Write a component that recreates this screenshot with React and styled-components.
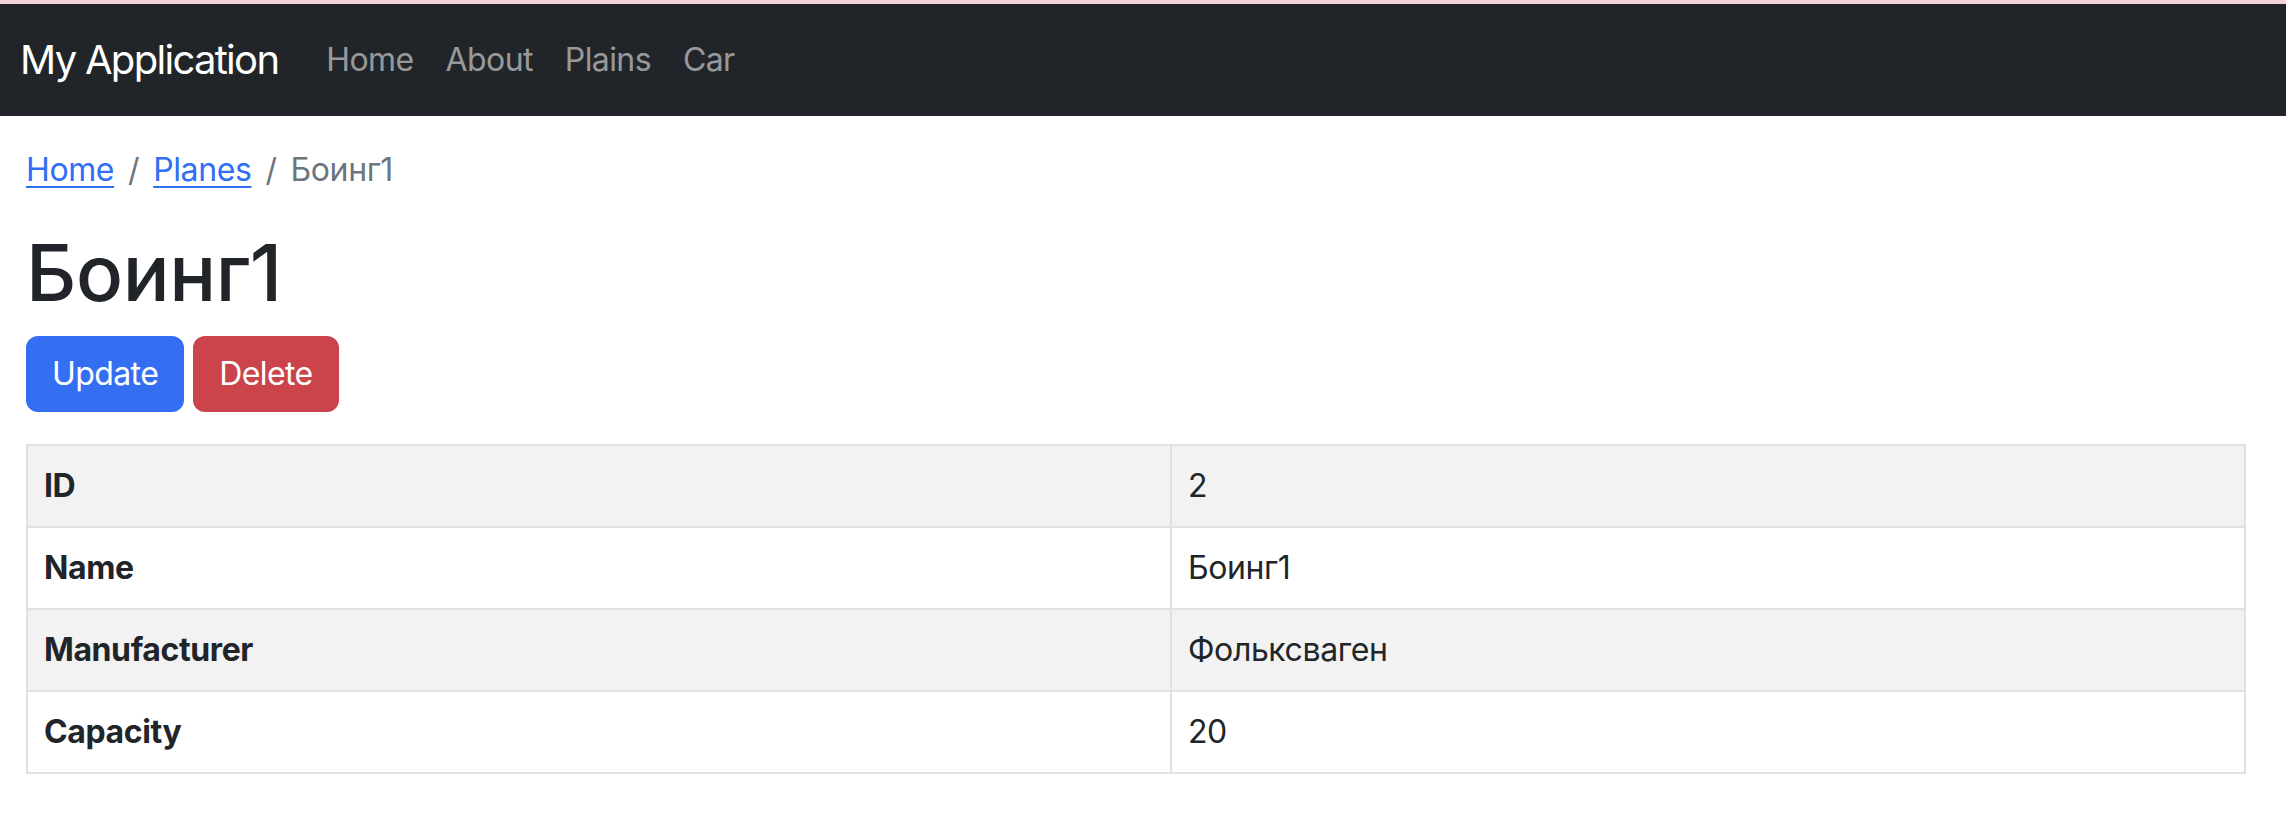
import React from "react";
import styled, { createGlobalStyle } from "styled-components";

const Global = createGlobalStyle`
  html, body { margin: 0; padding: 0; background: #fff; }
  body {
    font-family: Inter, "Noto Sans", "Liberation Sans", sans-serif;
    font-size: 32px;
    line-height: 1.5;
    color: #212529;
  }
  * { box-sizing: border-box; }
`;

const TopStrip = styled.div`
  height: 4px;
  background: #f2d2d6;
`;

const Navbar = styled.nav`
  background: #212529;
  height: 112px;
  display: flex;
  align-items: center;
  padding: 0 20px;
`;

const Brand = styled.a`
  color: #fff;
  font-size: 40px;
  line-height: 60px;
  text-decoration: none;
  margin-right: 32px;
  letter-spacing: -1.7px;
`;

const NavList = styled.ul`
  list-style: none;
  margin: 0;
  padding: 0;
  display: flex;
`;

const NavLink = styled.a`
  display: block;
  padding: 10px 16px;
  font-size: 32px;
  line-height: 48px;
  color: rgba(255, 255, 255, 0.55);
  text-decoration: none;
  letter-spacing: -0.6px;
`;

const Main = styled.main`
  padding: 30px 40px 40px 26px;
`;

const Crumbs = styled.ol`
  list-style: none;
  margin: 0 0 32px;
  padding: 0;
  display: flex;
  line-height: 48px;
  letter-spacing: -0.4px;
`;

const Crumb = styled.li`
  color: #6c757d;
  & + &::before {
    content: "/";
    color: #6c757d;
    padding: 0 14px;
  }
`;

const CrumbLink = styled.a`
  color: #2f6ef5;
  text-decoration: underline;
  text-underline-offset: 5px;
  text-decoration-thickness: 2px;
`;

const Title = styled.h1`
  margin: 0 0 16px;
  font-size: 78px;
  font-weight: 500;
  line-height: 1.2;
  letter-spacing: -0.4px;
`;

const Actions = styled.div`
  display: flex;
  gap: 9px;
`;

const Button = styled.button`
  font-family: inherit;
  font-size: 32px;
  line-height: 48px;
  padding: 12px 24px;
  border: 2px solid ${(p) => (p.$variant === "danger" ? "#cb444b" : "#346ff3")};
  background: ${(p) => (p.$variant === "danger" ? "#cb444b" : "#346ff3")};
  color: #fff;
  border-radius: 12px;
  letter-spacing: -0.6px;
  cursor: pointer;
`;

const Table = styled.table`
  margin-top: 32px;
  width: 2220px;
  border-collapse: collapse;
  border: 2px solid #dee2e6;
`;

const Row = styled.tr`
  background: ${(p) => (p.$striped ? "#f2f2f2" : "#fff")};
  border-bottom: 2px solid #dee2e6;
`;

const HeadCell = styled.th`
  width: 1144px;
  text-align: left;
  font-weight: 700;
  padding: 16px;
  line-height: 48px;
  border-right: 2px solid #dee2e6;
  letter-spacing: -0.4px;
`;

const Cell = styled.td`
  padding: 16px;
  line-height: 48px;
  letter-spacing: -0.4px;
`;

const rows = [
  ["ID", "2"],
  ["Name", "Боинг1"],
  ["Manufacturer", "Фольксваген"],
  ["Capacity", "20"],
];

export default function App() {
  return (
    <>
      <Global />
      <TopStrip />
      <Navbar>
        <Brand href="#">My Application</Brand>
        <NavList>
          {["Home", "About", "Plains", "Car"].map((l) => (
            <li key={l}>
              <NavLink href="#">{l}</NavLink>
            </li>
          ))}
        </NavList>
      </Navbar>
      <Main>
        <Crumbs>
          <Crumb>
            <CrumbLink href="#">Home</CrumbLink>
          </Crumb>
          <Crumb>
            <CrumbLink href="#">Planes</CrumbLink>
          </Crumb>
          <Crumb>Боинг1</Crumb>
        </Crumbs>
        <Title>Боинг1</Title>
        <Actions>
          <Button>Update</Button>
          <Button $variant="danger">Delete</Button>
        </Actions>
        <Table>
          <tbody>
            {rows.map(([k, v], i) => (
              <Row key={k} $striped={i % 2 === 0}>
                <HeadCell>{k}</HeadCell>
                <Cell>{v}</Cell>
              </Row>
            ))}
          </tbody>
        </Table>
      </Main>
    </>
  );
}
